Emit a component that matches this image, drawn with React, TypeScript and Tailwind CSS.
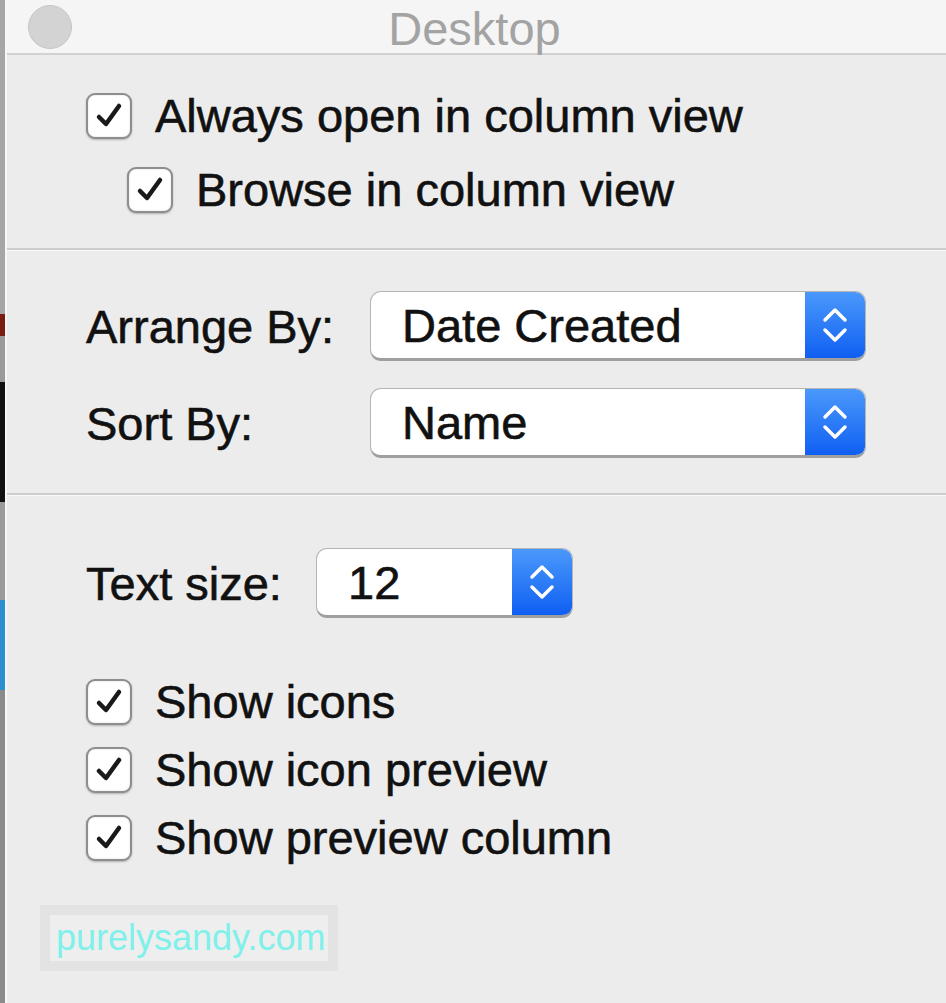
import React from 'react'

const font = { fontFamily: '"Liberation Sans", Arial, sans-serif' }

const label = 'text-[47px] leading-none text-[#111] [-webkit-text-stroke:0.6px_#111]'

const Check = ({ text }: { text: string }) => (
  <div className="flex h-[47px] items-center gap-[23px]">
    <div className="flex h-[46px] w-[46px] shrink-0 items-center justify-center rounded-[9px] border-2 border-[#8e8e8e] bg-white shadow-[0_1px_2px_rgba(0,0,0,0.25),inset_0_0_2px_rgba(0,0,0,0.15)]">
      <svg width="30" height="30" viewBox="0 0 30 30" fill="none">
        <path d="M5 16 L12 23 L25 5" stroke="#1a1a1a" strokeWidth="4.5" strokeLinecap="round" strokeLinejoin="round" />
      </svg>
    </div>
    <span className={label}>{text}</span>
  </div>
)

const Chevrons = () => (
  <svg width="30" height="44" viewBox="0 0 30 44" fill="none">
    <path d="M5 17 L15 7 L25 17" stroke="white" strokeWidth="3.5" strokeLinecap="round" strokeLinejoin="round" />
    <path d="M5 27 L15 37 L25 27" stroke="white" strokeWidth="3.5" strokeLinecap="round" strokeLinejoin="round" />
  </svg>
)

const Popup = ({ value, width }: { value: string; width: string }) => (
  <div className={`flex h-[70px] ${width} overflow-hidden rounded-[11px] border border-[#b5b5b5] border-b-[3px] border-b-[#9f9f9f] bg-white`}>
    <div className={`flex flex-1 items-center pl-[31px] ${label}`}>{value}</div>
    <div className="flex w-[60px] items-center justify-center bg-gradient-to-b from-[#4a98fb] to-[#0f5ef2]">
      <Chevrons />
    </div>
  </div>
)

const Separator = () => (
  <div className="h-[3px] border-t-2 border-[#cdcdcd] bg-white/70" />
)

export default function App() {
  return (
    <div className="flex h-[1003px] w-[946px] bg-[#ececec]" style={font}>
      {/* windows behind, peeking out on the left */}
      <div className="flex w-[5px] flex-col bg-[#8f8f8f]">
        <div className="h-[314px] bg-[#a6a6a6]" />
        <div className="h-[22px] bg-[#7a1c10]" />
        <div className="h-[46px] bg-[#9a9a9a]" />
        <div className="h-[120px] bg-[#111]" />
        <div className="h-[98px] bg-[#9b9b9b]" />
        <div className="h-[90px] bg-[#2b8fd0]" />
        <div className="flex-1 bg-[#8a8a8a]" />
      </div>
      <div className="w-[2px] bg-[#f7f7f7]" />

      <div className="flex flex-1 flex-col">
        {/* title bar */}
        <div className="grid h-[55px] grid-cols-[1fr_auto_1fr] items-center border-b-2 border-[#d2d2d2] bg-[#f5f5f5]">
          <div className="pl-[21px]">
            <div className="h-[44px] w-[44px] rounded-full border border-[#c6c6c6] bg-[#d3d3d3]" />
          </div>
          <div className="pt-[4px] pr-[4px] text-[47px] leading-none text-[#a3a3a3]">Desktop</div>
          <div />
        </div>

        {/* view options */}
        <div className="flex flex-col gap-[27px] pl-[79px] pt-[37px] pb-[35px]">
          <Check text="Always open in column view" />
          <div className="pl-[41px]">
            <Check text="Browse in column view" />
          </div>
        </div>

        <Separator />

        {/* arrange / sort */}
        <div className="flex flex-col gap-[27px] pl-[79px] pt-[40px] pb-[35px]">
          <div className="flex items-center">
            <span className={`w-[284px] ${label}`}>Arrange By:</span>
            <Popup value="Date Created" width="w-[496px]" />
          </div>
          <div className="flex items-center">
            <span className={`w-[284px] ${label}`}>Sort By:</span>
            <Popup value="Name" width="w-[496px]" />
          </div>
        </div>

        <Separator />

        {/* text size + toggles */}
        <div className="flex flex-col pl-[79px] pt-[52px]">
          <div className="flex items-center">
            <span className={`w-[230px] ${label}`}>Text size:</span>
            <Popup value="12" width="w-[257px]" />
          </div>
          <div className="mt-[60px] flex flex-col gap-[21px]">
            <Check text="Show icons" />
            <Check text="Show icon preview" />
            <Check text="Show preview column" />
          </div>
        </div>

        {/* watermark */}
        <div className="ml-[33px] mt-[44px] w-[298px] bg-[#e3e3e3] p-[10px]">
          <div className="flex h-[46px] items-center bg-[#eeeeee] pl-[6px] text-[36px] leading-none text-[#80f0ea]">
            purelysandy.com
          </div>
        </div>
      </div>
    </div>
  )
}
